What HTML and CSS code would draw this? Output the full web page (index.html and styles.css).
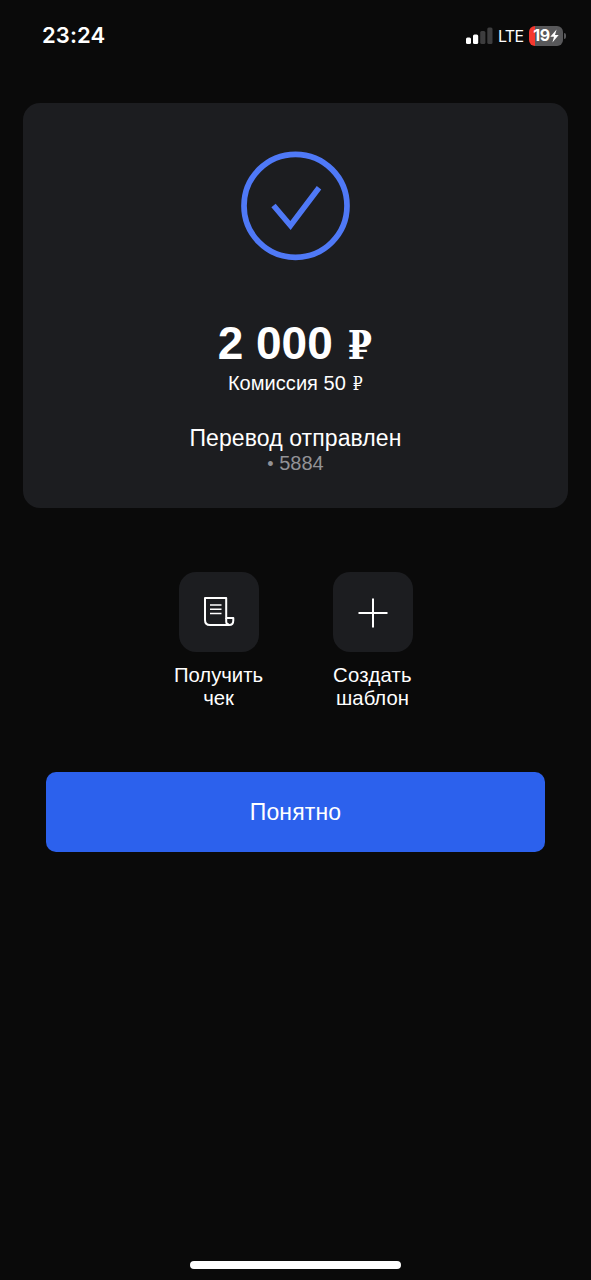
FILE: index.html
```html
<!DOCTYPE html>
<html lang="ru">
<head>
<meta charset="utf-8">
<title>Перевод отправлен</title>
<link rel="stylesheet" href="styles.css">
</head>
<body>
<header class="status">
  <div class="clock">23:24</div>
  <div class="indicators">
    <svg class="signal" width="27" height="18" viewBox="0 0 27 18">
      <rect x="0" y="10.5" width="5" height="6.5" rx="1.5" fill="#fff"/>
      <rect x="7" y="7.5" width="5.2" height="9.5" rx="1.5" fill="#fff"/>
      <rect x="14.2" y="4" width="5.2" height="13" rx="1.5" fill="#3d3d3e"/>
      <rect x="21.3" y="0.5" width="5.2" height="16.5" rx="1.5" fill="#3d3d3e"/>
    </svg>
    <span class="network">LTE</span>
    <div class="battery">
      <span class="level">19</span>
      <svg width="9" height="14" viewBox="0 0 9 14"><path d="M6.6 0.5 0.3 7.8H4L2.4 13.5 8.7 6H5Z" fill="#fff"/></svg>
    </div>
    <span class="battery-tip"></span>
  </div>
</header>
<main>
  <section class="card">
    <svg class="check" width="109" height="110" viewBox="0.5 0 109 110" fill="none" stroke="#4f79f7">
      <circle cx="55" cy="54.8" r="51.5" stroke-width="5.7"/>
      <path d="M33 54.5 50 74.5 78.5 36.7" stroke-width="5.6"/>
    </svg>
    <h1 class="amount">2 000 <span class="ruble">₽</span></h1>
    <p class="fee">Комиссия 50 <span class="ruble">₽</span></p>
    <p class="state">Перевод отправлен</p>
    <p class="account"><span class="dot">•</span> 5884</p>
  </section>
  <div class="actions">
    <div class="action">
      <div class="tile">
        <svg width="32" height="32" viewBox="0 0 32 32" fill="none" stroke="#fff" stroke-width="2">
          <path d="M2 2H23.2V22H30.3V24.5Q30.3 29 26 29H7Q2 29 2 24Z" stroke-linejoin="round"/>
          <path d="M23.2 22V25.5Q23.2 28.5 26 28.5"/>
          <path d="M7 9H18.5M7 13.2H18.5M7 17.5H18.5" stroke-width="1.5"/>
        </svg>
      </div>
      <div class="label">Получить<br>чек</div>
    </div>
    <div class="action">
      <div class="tile">
        <svg width="32" height="32" viewBox="0 0 32 32" stroke="#fff" stroke-width="2"><path d="M1.5 17H30.5M16 2.5V31.5"/></svg>
      </div>
      <div class="label"><span class="wide">Создать</span><br>шаблон</div>
    </div>
  </div>
  <button class="confirm">Понятно</button>
</main>
<footer class="home"><span class="home-bar"></span></footer>
</body>
</html>
```
FILE: styles.css
```css
* { box-sizing: border-box; margin: 0; padding: 0; }
body {
  display: flex;
  flex-direction: column;
  width: 591px;
  height: 1280px;
  background: #0a0a0a;
  color: #fff;
  font-family: "Liberation Sans", Arial, sans-serif;
}
.status {
  display: flex;
  justify-content: space-between;
  height: 103px;
  padding: 21px 25px 0 42px;
  font-family: Inter, sans-serif;
}
.clock { height: 30px; font-size: 22px; line-height: 29px; font-weight: 600; letter-spacing: 0.1px; }
.indicators { display: flex; align-items: center; height: 29px; }
.signal { margin-right: 5px; }
.network { width: 31px; font-size: 16px; letter-spacing: -0.7px; line-height: 30px; }
.battery {
  display: flex;
  align-items: center;
  justify-content: center;
  width: 34px;
  height: 20px;
  border-radius: 6px;
  background: linear-gradient(90deg, #f5382f 6px, #58585a 6px);
}
.level { font-size: 16px; line-height: 19px; font-weight: 700; letter-spacing: -0.5px; }
.battery-tip { width: 2px; height: 6px; margin-left: 1px; border-radius: 0 2px 2px 0; background: #58585a; }
main { display: flex; flex-direction: column; align-items: center; }
.card {
  display: flex;
  flex-direction: column;
  align-items: center;
  width: 545px;
  height: 405px;
  padding-top: 48px;
  border-radius: 17px;
  background: #1c1d20;
}
.ruble {
  display: inline-block;
  font-family: "DejaVu Serif", serif;
  font-size: 0.9em;
  line-height: 1;
  transform: scaleX(0.87);
}
.amount { height: 52px; margin-top: 56px; font-size: 46px; line-height: 52px; font-weight: 700; white-space: nowrap; }
.amount .ruble { font-size: 0.87em; }
.fee { height: 24px; margin-top: 2px; font-size: 20px; line-height: 24px; letter-spacing: 0.05px; white-space: nowrap; }
.state { margin-top: 30px; font-size: 23px; line-height: 26px; letter-spacing: 0.1px; }
.account { font-size: 20px; line-height: 24px; color: #929296; }
.dot { font-size: 18px; }
.actions { display: flex; gap: 54px; margin-top: 63.5px; }
.action { display: flex; flex-direction: column; align-items: center; width: 100px; }
.tile {
  display: flex;
  align-items: center;
  justify-content: center;
  width: 80px;
  height: 80px;
  border-radius: 17px;
  background: #1c1d20;
}
.label { margin-top: 12px; font-size: 20.3px; line-height: 23px; text-align: center; }
.wide { letter-spacing: 0.25px; }
.confirm {
  width: 499px;
  height: 80px;
  margin-top: 62px;
  padding-top: 2px;
  border: 0;
  border-radius: 10px;
  background: #2c61ed;
  color: #fff;
  font: 23px "Liberation Sans", Arial, sans-serif;
  letter-spacing: 0.15px;
}
.home { display: flex; justify-content: center; margin-top: auto; padding-bottom: 11px; }
.home-bar { width: 211px; height: 8px; border-radius: 4px; background: #fff; }
```
